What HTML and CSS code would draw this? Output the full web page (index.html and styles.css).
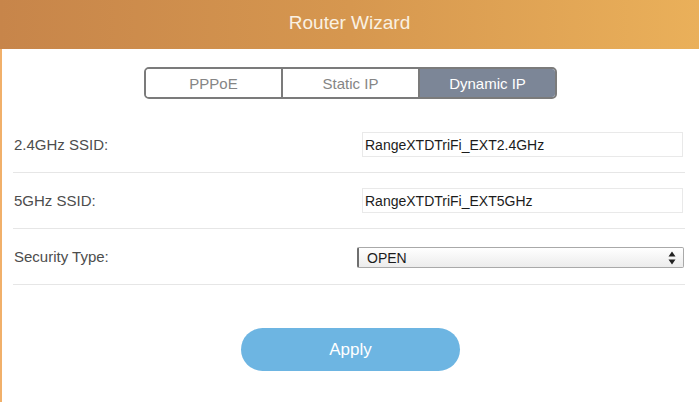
FILE: index.html
```html
<!DOCTYPE html>
<html>
<head>
<meta charset="utf-8">
<link rel="stylesheet" href="styles.css">
</head>
<body>
<div class="page">
  <header class="header">Router Wizard</header>
  <div class="tabs">
    <div class="tab">PPPoE</div>
    <div class="tab">Static IP</div>
    <div class="tab active">Dynamic IP</div>
  </div>
  <div class="form">
    <div class="row">
      <span class="label">2.4GHz SSID:</span>
      <div class="input">RangeXTDTriFi_EXT2.4GHz</div>
    </div>
    <div class="row">
      <span class="label">5GHz SSID:</span>
      <div class="input">RangeXTDTriFi_EXT5GHz</div>
    </div>
    <div class="row">
      <span class="label">Security Type:</span>
      <div class="select">
        <span>OPEN</span>
        <svg class="arrows" width="8" height="14" viewBox="0 0 8 14"><path d="M4 0.5 L7.5 5.5 L0.5 5.5 Z M4 13.5 L7.5 8.5 L0.5 8.5 Z" fill="#222"/></svg>
      </div>
    </div>
  </div>
  <div class="actions">
    <button class="apply">Apply</button>
  </div>
</div>
</body>
</html>
```
FILE: styles.css
```css
html, body {
  margin: 0;
  padding: 0;
  background: #fff;
}
body {
  font-family: "Liberation Sans", Arial, sans-serif;
}
.page {
  min-height: 402px;
  border-left: 2px solid #f1b06a;
  box-sizing: border-box;
}
.header {
  height: 49px;
  margin-left: -2px;
  background: linear-gradient(to right, #c7854a 0%, #d6974f 50%, #eab05a 100%);
  color: #faf1e3;
  font-size: 19px;
  display: flex;
  align-items: center;
  justify-content: center;
  padding-bottom: 4px;
  box-sizing: border-box;
}
.tabs {
  display: flex;
  width: 413px;
  height: 32px;
  margin: 18px auto 0;
  border: 2px solid #7b7b7b;
  border-radius: 5px;
  box-sizing: border-box;
  overflow: hidden;
}
.tab {
  flex: 1;
  display: flex;
  align-items: center;
  justify-content: center;
  font-size: 15px;
  color: #858585;
  background: #fff;
}
.tab + .tab {
  border-left: 2px solid #7b7b7b;
}
.tab.active {
  background: #7c8697;
  color: #fff;
}
.form {
  margin: 18px 14px 0 11px;
}
.row {
  display: flex;
  align-items: center;
  justify-content: space-between;
  height: 55px;
  border-bottom: 1px solid #e6e6e6;
}
.label {
  padding-left: 1px;
  font-size: 15px;
  color: #4d4d4d;
}
.input {
  width: 321px;
  height: 25px;
  margin-right: 2px;
  border: 1px solid #e9e9e9;
  box-sizing: border-box;
  padding-left: 2px;
  display: flex;
  align-items: center;
  font-size: 14px;
  color: #1c1c1c;
}
.select {
  width: 327px;
  height: 21px;
  margin-right: 1px;
  margin-top: 2px;
  box-sizing: border-box;
  border: 1px solid #a9a9a9;
  border-left: 2px solid #6f6f6f;
  border-radius: 2px;
  background: linear-gradient(#ffffff, #ececec);
  display: flex;
  align-items: center;
  justify-content: space-between;
  padding: 0 7px 0 8px;
  font-size: 14px;
  color: #1c1c1c;
}
.arrows {
  display: block;
}
.actions {
  display: flex;
  justify-content: center;
  margin-top: 43px;
}
.apply {
  width: 219px;
  height: 43px;
  border: none;
  border-radius: 22px;
  background: #6db5e2;
  color: #fff;
  font-family: "Liberation Sans", Arial, sans-serif;
  font-size: 17px;
  padding: 0;
}
```
